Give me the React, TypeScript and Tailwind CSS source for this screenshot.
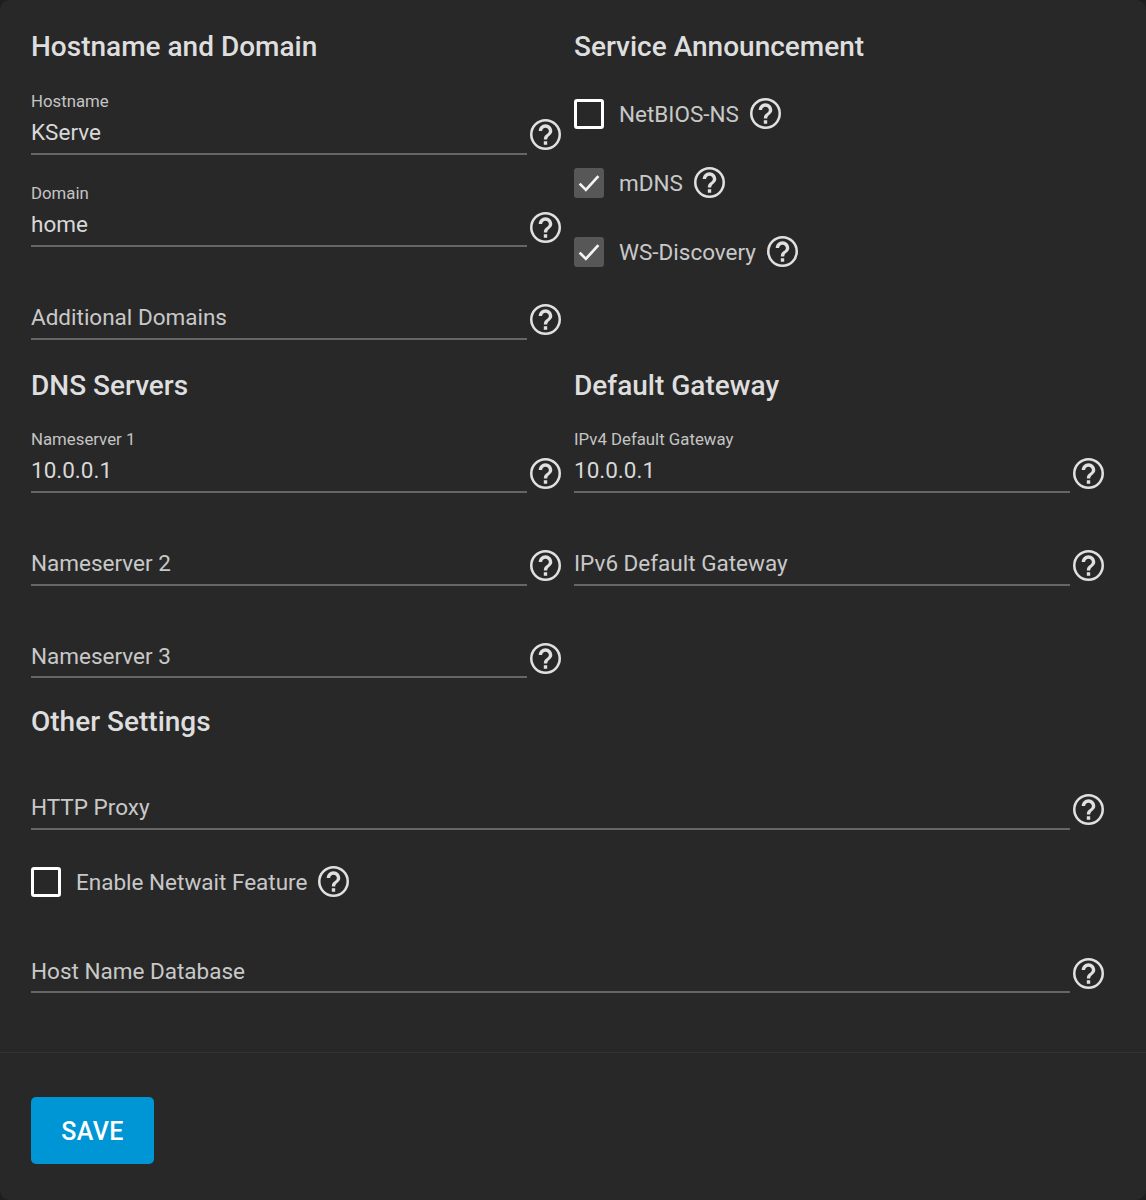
import React from 'react';

function Help() {
  return (
    <svg viewBox="2.85 2.85 18.3 18.3" className="m-[1px] h-[31px] w-[31px] shrink-0 fill-[#e0e0e0]">
      <circle cx="12" cy="12" r="8.4" fill="none" stroke="#e0e0e0" strokeWidth="1.5" />
      <path d="M11 18h2v-2h-2v2zm1-12c-2.21 0-4 1.79-4 4h2c0-1.1.9-2 2-2s2 .9 2 2c0 2-3 1.75-3 5h2c0-2.25 3-2.5 3-5 0-2.21-1.79-4-4-4z" />
    </svg>
  );
}

function Heading({ children }: { children: React.ReactNode }) {
  return <h2 className="h-8 pt-[1px] text-[28px] leading-8 font-medium text-[#dedede]">{children}</h2>;
}

function Field({ label, value, className }: { label: string; value?: string; className?: string }) {
  return (
    <div className={`flex h-[62px] items-end ${className ?? 'mt-[30.5px]'}`}>
      <div className="h-[62px] min-w-0 flex-1 border-b-2 border-[#666666]">
        {value ? (
          <>
            <div className="h-4 text-[16.8px] leading-4 text-[#c4c4c4]">{label}</div>
            <div className="mt-[11px] h-6 text-[22.5px] leading-6 text-[#d8d8d8]">{value}</div>
          </>
        ) : (
          <div className="pt-[27.9px] text-[22.5px] leading-6 text-[#c8c8c8]">{label}</div>
        )}
      </div>
      <div className="mb-[3.5px] ml-[2px] flex">
        <Help />
      </div>
    </div>
  );
}

function Check({ label, checked, className }: { label: string; checked?: boolean; className?: string }) {
  return (
    <div className={`flex h-[34px] items-center ${className ?? ''}`}>
      {checked ? (
        <div className="flex h-[30px] w-[30px] items-center justify-center rounded-[3px] bg-[#575757]">
          <svg viewBox="0 0 24 24" className="h-[30px] w-[30px]" fill="none" stroke="#f2f2f2" strokeWidth="2.2">
            <path d="M4.5 12.5l5 5L19.5 6.5" />
          </svg>
        </div>
      ) : (
        <div className="h-[30px] w-[30px] rounded-[3px] border-[3px] border-white" />
      )}
      <span className="mr-[10px] ml-[15px] pt-[2px] text-[22.5px] text-[#c8c8c8]">{label}</span>
      <Help />
    </div>
  );
}

export default function App() {
  return (
    <div className="h-[1200px] bg-[#1f1f1f] font-['Roboto',sans-serif]">
      <div className="flex h-full flex-col rounded-[10px] bg-[#282828]">
        <div className="pt-[30px] pr-[41px] pl-[31px]">
          <div className="grid grid-cols-[543px_1fr]">
            <div className="pr-[12px]">
              <Heading>Hostname and Domain</Heading>
              <Field label="Hostname" value="KServe" />
              <Field label="Domain" value="home" />
              <Field label="Additional Domains" />
            </div>
            <div>
              <Heading>Service Announcement</Heading>
              <Check label="NetBIOS-NS" className="mt-[34.5px]" />
              <Check label="mDNS" checked className="mt-[35px]" />
              <Check label="WS-Discovery" checked className="mt-[35px]" />
            </div>
          </div>
          <div className="mt-[29px] grid grid-cols-[543px_1fr]">
            <div className="pr-[12px]">
              <Heading>DNS Servers</Heading>
              <Field label="Nameserver 1" value="10.0.0.1" />
              <Field label="Nameserver 2" />
              <Field label="Nameserver 3" />
            </div>
            <div>
              <Heading>Default Gateway</Heading>
              <Field label="IPv4 Default Gateway" value="10.0.0.1" />
              <Field label="IPv6 Default Gateway" />
            </div>
          </div>
          <div className="mt-[27px]">
            <Heading>Other Settings</Heading>
            <Field label="HTTP Proxy" />
            <Check label="Enable Netwait Feature" className="mt-[35px]" />
            <Field label="Host Name Database" className="mt-[32.5px]" />
          </div>
        </div>
        <div className="mt-[59px] border-t border-[#333333] pt-[44px] pl-[31px]">
          <button className="h-[67px] w-[123px] rounded-[5px] bg-[#0095d5] pt-[2px] text-[25px] font-medium tracking-[0.4px] text-white">
            SAVE
          </button>
        </div>
      </div>
    </div>
  );
}
